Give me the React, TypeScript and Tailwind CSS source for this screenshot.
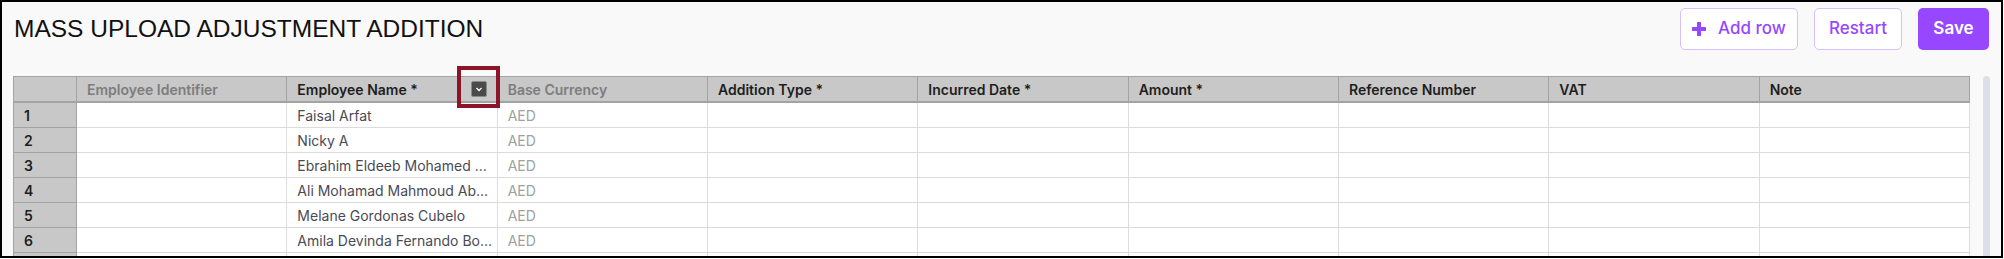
import React from 'react';

const columns = [
  { title: 'Employee Identifier', muted: true },
  { title: 'Employee Name *', muted: false, menu: true },
  { title: 'Base Currency', muted: true },
  { title: 'Addition Type *', muted: false },
  { title: 'Incurred Date *', muted: false },
  { title: 'Amount *', muted: false },
  { title: 'Reference Number', muted: false },
  { title: 'VAT', muted: false },
  { title: 'Note', muted: false },
];

const rows = [
  'Faisal Arfat',
  'Nicky A',
  'Ebrahim Eldeeb Mohamed ...',
  'Ali Mohamad Mahmoud Ab...',
  'Melane Gordonas Cubelo',
  'Amila Devinda Fernando Bo...',
];

export default function App() {
  return (
    <div className="w-[2004px] h-[259px] bg-white">
      <div className="relative w-[2003px] h-[258px] overflow-hidden border-2 border-black bg-[#f9f9f9] font-['Inter',sans-serif]">
        {/* Header */}
        <div className="flex h-[74px] items-start justify-between pl-3 pr-[12px]">
          <h1 className="mt-[12px] font-['Liberation_Sans',Arial,sans-serif] text-[24.5px] leading-[30px] text-[#111]">
            MASS UPLOAD ADJUSTMENT ADDITION
          </h1>
          <div className="mt-[6px] flex gap-4">
            <button className="flex h-[42px] w-[118px] items-center justify-center gap-[12px] rounded-[5px] border border-[#d8c0ff] bg-white text-[17px] font-medium text-[#9747ff]">
              <svg className="h-[14px] w-[14px]" viewBox="0 0 14 14">
                <path d="M7 1v12M1 7h12" stroke="#9747ff" strokeWidth={4} strokeLinecap="round" />
              </svg>
              Add row
            </button>
            <button className="h-[42px] w-[88px] rounded-[5px] border border-[#d8c0ff] bg-white text-[17px] font-medium text-[#9747ff]">
              Restart
            </button>
            <button className="h-[42px] w-[71px] rounded-[5px] bg-[#9747ff] text-[17px] font-semibold text-white">
              Save
            </button>
          </div>
        </div>

        {/* Grid + scrollbar */}
        <div className="flex items-start gap-[13px] pl-[11px]">
          <div className="grid grid-cols-[63px_repeat(9,210.33px)] border-l border-t border-[#a3a3a3] text-[14px]">
            <div className="h-[26px] border-b-2 border-r border-[#a3a3a3] bg-[#c8c8c8]" />
            {columns.map((col) => (
              <div
                key={col.title}
                className={`flex h-[26px] items-center justify-between border-b-2 border-r border-[#a3a3a3] bg-[#c8c8c8] pl-[10px] pr-[10px] font-semibold ${
                  col.muted ? 'text-[#7d7d7d]' : 'text-[#1e1e1e]'
                }`}
              >
                <span>{col.title}</span>
                {col.menu && (
                  <span className="flex h-[16px] w-[16px] items-center justify-center rounded-[2px] border border-[#8a8a8a] bg-[#4a4a4a]">
                    <svg className="h-[8px] w-[8px]" viewBox="0 0 8 8">
                      <path d="M1.5 3l2.5 2.5L6.5 3" fill="none" stroke="#fff" strokeWidth={1.3} />
                    </svg>
                  </span>
                )}
              </div>
            ))}
            {rows.map((name, i) => (
              <React.Fragment key={i}>
                <div className="flex h-[25px] items-center border-b border-r border-[#a3a3a3] bg-[#c8c8c8] pl-[10px] font-semibold text-[#1e1e1e]">
                  {i + 1}
                </div>
                {columns.map((col, j) => (
                  <div
                    key={col.title}
                    className="flex h-[25px] items-center overflow-hidden whitespace-nowrap border-b border-r border-[#dcdcdc] bg-white pl-[10px]"
                  >
                    {j === 1 && <span className="text-[#4a4a56]">{name}</span>}
                    {j === 2 && <span className="text-[#a0a0a0]">AED</span>}
                  </div>
                ))}
              </React.Fragment>
            ))}
            {/* next row, only its top edge is in view */}
            <div className="h-[25px] border-r border-[#a3a3a3] bg-[#c8c8c8]" />
            {columns.map((col) => (
              <div key={col.title} className="h-[25px] border-r border-[#dcdcdc] bg-white" />
            ))}
          </div>
          <div className="h-[200px] w-[7px] rounded-full bg-[#dde0e8]" />
        </div>

        {/* Highlight annotation */}
        <div className="absolute left-[455px] top-[64px] h-[42px] w-[43px] border-4 border-[#8c1627]" />
      </div>
    </div>
  );
}
